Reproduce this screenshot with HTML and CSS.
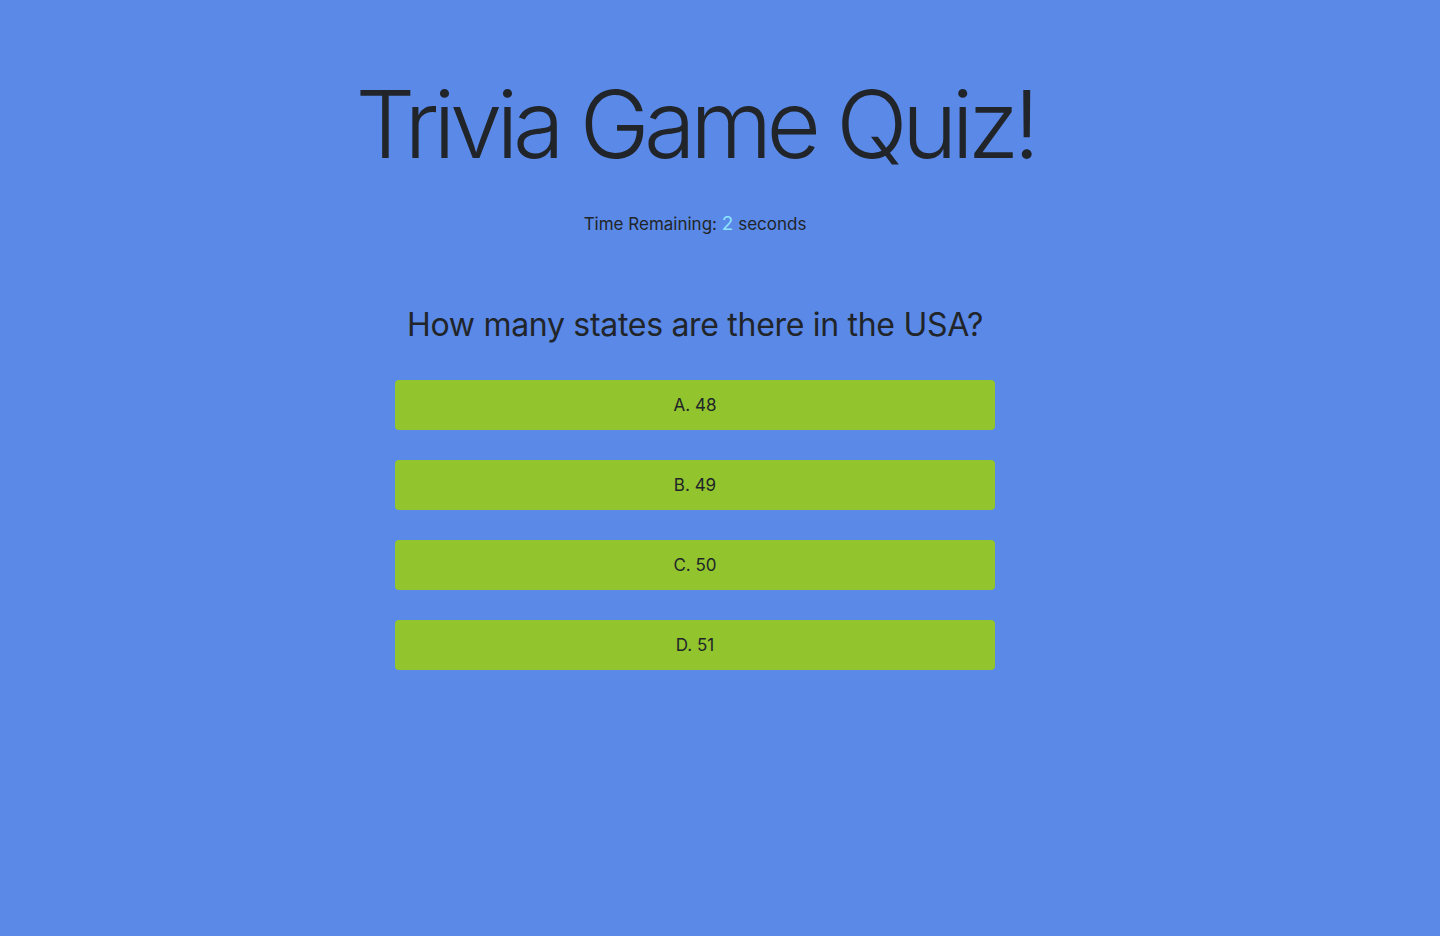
FILE: index.html
```html
<!DOCTYPE html>
<html lang="en">
<head>
    <meta charset="UTF-8">
    <meta name="viewport" content="width=device-width, initial-scale=1.0">
    <title>Trivia Game Quiz!</title>
    <link rel="stylesheet" href="styles.css">
</head>
<body>
    <main class="quiz">
        <h1 class="quiz-title">Trivia Game Quiz!</h1>

        <p class="timer">Time Remaining: <span class="timer-count">2</span> seconds</p>

        <!-- Question -->
        <h2 class="question">How many states are there in the USA?</h2>

        <!-- Answers -->
        <div class="answers">
            <button class="answer">A. 48</button>
            <button class="answer">B. 49</button>
            <button class="answer">C. 50</button>
            <button class="answer">D. 51</button>
        </div>
    </main>
</body>
</html>
```

FILE: styles.css
```css
body {
    margin: 0;
    min-height: 936px;
    background-color: #5a89e8;
    color: #212529;
    font-family: Inter, "Noto Sans", sans-serif;
}

.quiz {
    display: flex;
    flex-direction: column;
    align-items: center;
    padding: 68px 50px 0 0;
}

.quiz-title {
    margin: 0;
    font-size: 94px;
    font-weight: 300;
    line-height: 1.2;
    letter-spacing: -5.6px;
}

.timer {
    margin: 31px 0 0;
    font-size: 17px;
    line-height: 24px;
}

.timer-count {
    color: #8fe3ff;
    font-size: 19px;
}

.question {
    margin: 70px 0 0;
    font-size: 32px;
    font-weight: 400;
    line-height: 1.2;
    letter-spacing: -0.3px;
}

.answers {
    display: flex;
    flex-direction: column;
    gap: 30px;
    margin-top: 36px;
}

.answer {
    width: 600px;
    height: 50px;
    border: none;
    border-radius: 4px;
    background-color: #91c42d;
    color: #212529;
    font-family: inherit;
    font-size: 17px;
    cursor: pointer;
}
```
